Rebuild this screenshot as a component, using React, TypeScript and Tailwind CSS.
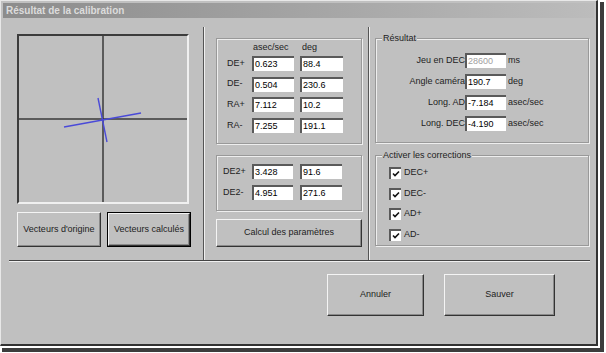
import type { ReactNode } from 'react';

const rows = [
  { label: 'DE+', a: '0.623', b: '88.4' },
  { label: 'DE-', a: '0.504', b: '230.6' },
  { label: 'RA+', a: '7.112', b: '10.2' },
  { label: 'RA-', a: '7.255', b: '191.1' },
];

const rows2 = [
  { label: 'DE2+', a: '3.428', b: '91.6' },
  { label: 'DE2-', a: '4.951', b: '271.6' },
];

const results = [
  { label: 'Jeu en DEC', value: '28600', unit: 'ms', muted: true },
  { label: 'Angle caméra', value: '190.7', unit: 'deg' },
  { label: 'Long. AD', value: '-7.184', unit: 'asec/sec' },
  { label: 'Long. DEC', value: '-4.190', unit: 'asec/sec' },
];

const corrections = ['DEC+', 'DEC-', 'AD+', 'AD-'];

function Field({ value, className = '', muted = false }: { value: string; className?: string; muted?: boolean }) {
  return (
    <div
      className={`h-[15px] shrink-0 bg-white border-t-2 border-l-2 border-t-[#5a5a5a] border-l-[#5a5a5a] pl-[1px] leading-[13px] ${
        muted ? 'text-[#a0a0a0]' : 'text-black'
      } ${className}`}
    >
      {value}
    </div>
  );
}

function Btn({ children, className = '' }: { children: ReactNode; className?: string }) {
  return (
    <div
      className={`flex items-center justify-center bg-[#c0c0c0] border border-t-[#f4f4f4] border-l-[#f4f4f4] border-b-[#333] border-r-[#333] shadow-[inset_-1px_-1px_0_#8a8a8a] text-[#222] ${className}`}
    >
      {children}
    </div>
  );
}

function Group({ label, className = '', children }: { label?: string; className?: string; children: ReactNode }) {
  return (
    <div className={`relative border border-[#999] shadow-[inset_1px_1px_0_#eee,1px_1px_0_#eee] ${className}`}>
      {label && (
        <span className="absolute -top-[7px] left-[6px] bg-[#c0c0c0] px-[1px] leading-[12px] text-[#222]">{label}</span>
      )}
      {children}
    </div>
  );
}

function Check() {
  return (
    <div className="w-[12px] h-[12px] bg-white border-t-2 border-l-2 border-t-[#5a5a5a] border-l-[#5a5a5a] flex items-center justify-center">
      <svg width="8" height="8" viewBox="0 0 8 8">
        <path d="M1 3.5 L3 5.5 L7 1.5" stroke="#111" strokeWidth="1.6" fill="none" />
      </svg>
    </div>
  );
}

export default function App() {
  return (
    <div className="w-[606px] h-[353px] bg-white font-['Liberation_Sans',Arial,sans-serif] text-[9px]">
      <div className="w-[598px] h-[346px] bg-[#c0c0c0] border-t border-l border-t-[#e8e8e8] border-l-[#e8e8e8] border-b-2 border-r-2 border-b-[#333] border-r-[#333] shadow-[0_0_0_2px_#fff,4px_4px_0_2px_#3c3c3c] flex flex-col">
        {/* Title bar */}
        <div className="mx-[2px] mt-[2px] h-[15px] bg-gradient-to-r from-[#8c8c8c] to-[#bcbcbc] flex items-center pl-[3px]">
          <span className="text-[10px] font-bold text-[#dcdcdc] leading-none">Résultat de la calibration</span>
        </div>

        {/* Main area */}
        <div className="mt-[9px] h-[233px] flex">
          {/* Left: vectors */}
          <div className="w-[202px] pl-[16px] pt-[7px] flex flex-col">
            <div className="relative w-[172px] h-[170px] border-t-2 border-l-2 border-t-[#3c3c3c] border-l-[#3c3c3c] border-b-2 border-r-2 border-b-[#f0f0f0] border-r-[#f0f0f0]">
              <svg className="absolute inset-0" width="168" height="166" viewBox="0 0 168 166">
                <line x1="84" y1="0" x2="84" y2="166" stroke="#3a3a3a" strokeWidth="1.5" />
                <line x1="0" y1="83" x2="168" y2="83" stroke="#3a3a3a" strokeWidth="1.5" />
                <line x1="45" y1="91" x2="122" y2="77" stroke="#4a4ad8" strokeWidth="1.4" />
                <line x1="79" y1="62" x2="88" y2="106" stroke="#4a4ad8" strokeWidth="1.4" />
              </svg>
            </div>
            <div className="mt-[8px] flex gap-[6px]">
              <Btn className="w-[84px] h-[35px]">Vecteurs d'origine</Btn>
              <div className="w-[84px] h-[35px] border border-black flex">
                <Btn className="flex-1">Vecteurs calculés</Btn>
              </div>
            </div>
          </div>

          <div className="w-[2px] h-full border-l border-l-[#555] border-r border-r-[#f0f0f0]" />

          {/* Middle: measurements */}
          <div className="w-[163px] pl-[11px] pt-[11px] flex flex-col">
            <Group className="w-[146px] h-[106px] pl-[10px] pt-[3px]">
              <div className="flex h-[11px] leading-[11px] text-[#222]">
                <span className="w-[25px]" />
                <span className="w-[49px] pl-[1px]">asec/sec</span>
                <span className="pl-[1px]">deg</span>
              </div>
              <div className="mt-[3px] flex flex-col gap-[5.7px]">
                {rows.map((r) => (
                  <div key={r.label} className="flex items-center">
                    <span className="w-[25px] text-[#222]">{r.label}</span>
                    <Field value={r.a} className="w-[42px]" />
                    <Field value={r.b} className="w-[43px] ml-[6px]" />
                  </div>
                ))}
              </div>
            </Group>
            <Group className="mt-[11px] w-[146px] h-[56px] pl-[6px] pt-[8px]">
              <div className="flex flex-col gap-[6px]">
                {rows2.map((r) => (
                  <div key={r.label} className="flex items-center">
                    <span className="w-[29px] text-[#222]">{r.label}</span>
                    <Field value={r.a} className="w-[41px]" />
                    <Field value={r.b} className="w-[42px] ml-[7px]" />
                  </div>
                ))}
              </div>
            </Group>
            <Btn className="mt-[8px] w-[146px] h-[28px]">Calcul des paramètres</Btn>
          </div>

          <div className="w-[2px] h-full border-l border-l-[#555] border-r border-r-[#f0f0f0]" />

          {/* Right: results */}
          <div className="pl-[5px] pt-[11px] flex flex-col">
            <Group label="Résultat" className="w-[214px] h-[105px] pt-[14px]">
              <div className="flex flex-col gap-[6px]">
                {results.map((r) => (
                  <div key={r.label} className="flex items-center">
                    <span className="w-[89px] text-right text-[#222]">{r.label}</span>
                    <Field value={r.value} muted={r.muted} className="w-[41px]" />
                    <span className="ml-[2px] text-[#222]">{r.unit}</span>
                  </div>
                ))}
              </div>
            </Group>
            <Group label="Activer les corrections" className="mt-[12px] w-[214px] h-[91px] pl-[13px] pt-[11px]">
              <div className="flex flex-col gap-[8.5px]">
                {corrections.map((c) => (
                  <div key={c} className="flex items-center gap-[3px] h-[12px]">
                    <Check />
                    <span className="text-[#222]">{c}</span>
                  </div>
                ))}
              </div>
            </Group>
          </div>
        </div>

        {/* Separator */}
        <div className="ml-[8px] w-[581px] h-[2px] border-t border-t-[#444] border-b border-b-[#f0f0f0]" />

        {/* Bottom buttons */}
        <div className="mt-[12px] ml-[326px] flex gap-[20px]">
          <Btn className="w-[97px] h-[42px]">Annuler</Btn>
          <Btn className="w-[111px] h-[42px]">Sauver</Btn>
        </div>
      </div>
    </div>
  );
}
